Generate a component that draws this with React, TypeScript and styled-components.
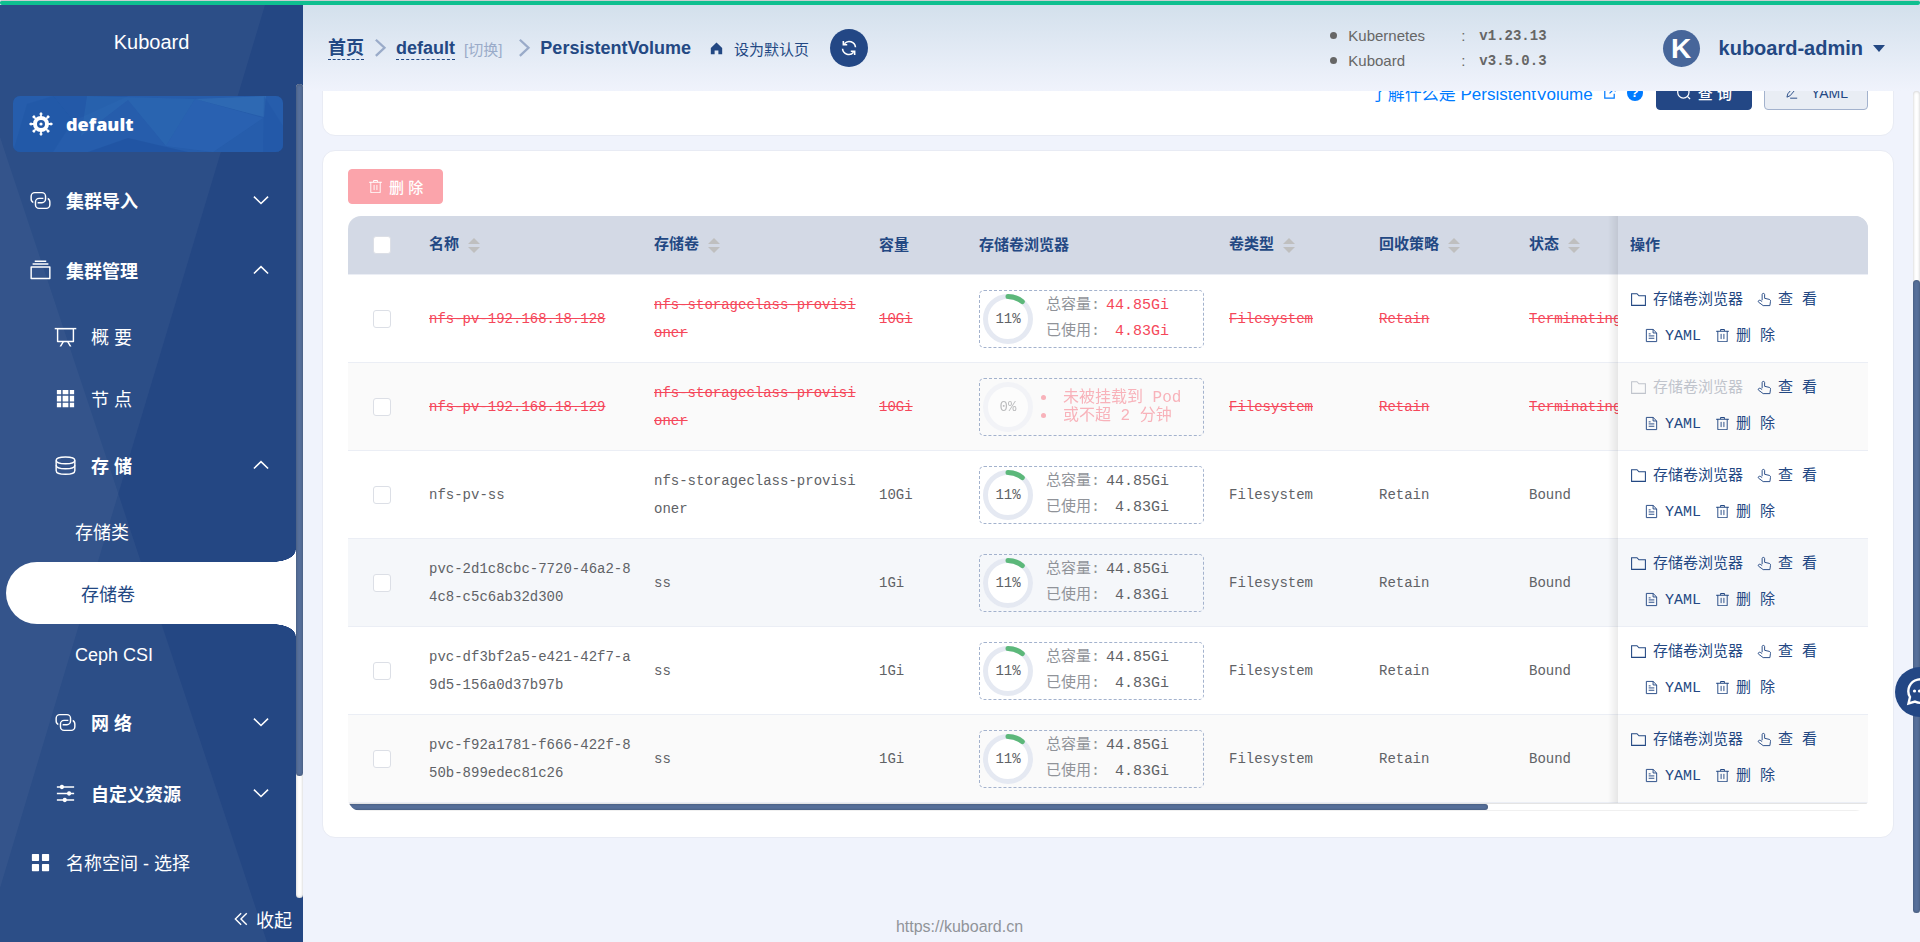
import React, { useLayoutEffect, useRef } from "react";
import styled, { createGlobalStyle, css } from "styled-components";

const SANS = '"Liberation Sans", "Noto Sans CJK SC", sans-serif';
const MONO = '"Liberation Mono", "Noto Sans CJK SC", monospace';
const NAVY = "#234883";
const THUMB = "#57709b";

const GlobalStyle = createGlobalStyle`
  *, *::before, *::after { box-sizing: border-box; }
  html, body, #root { height: 100%; }
  body { margin: 0; font-family: ${SANS}; color: #606266; background: #f0f3fc; overflow: hidden; }
  button { font: inherit; cursor: pointer; }
  a { text-decoration: none; color: inherit; }
  ul { list-style: none; margin: 0; padding: 0; }
`;

/* ---------- icons ---------- */

const Svg = styled.svg<{ $size: number }>`
  width: ${(p) => p.$size}px;
  height: ${(p) => p.$size}px;
  flex: none;
  display: block;
`;

const solid: Record<string, string[]> = {
  connection: [
    "M640 384v64H448a128 128 0 0 0-128 128v128a128 128 0 0 0 128 128h320a128 128 0 0 0 128-128V576a128 128 0 0 0-64-110.848V394.88c74.56 26.368 128 97.472 128 181.056v128a192 192 0 0 1-192 192H448a192 192 0 0 1-192-192V576a192 192 0 0 1 192-192h192z",
    "M384 640v-64h192a128 128 0 0 0 128-128V320a128 128 0 0 0-128-128H256a128 128 0 0 0-128 128v128a128 128 0 0 0 64 110.848v70.272A192.064 192.064 0 0 1 64 448V320a192 192 0 0 1 192-192h320a192 192 0 0 1 192 192v128a192 192 0 0 1-192 192H384z",
  ],
  files: [
    "M128 384v448h768V384H128zm-32-64h832a32 32 0 0 1 32 32v512a32 32 0 0 1-32 32H96a32 32 0 0 1-32-32V352a32 32 0 0 1 32-32zm64-128h704v64H160zm96-128h512v64H256z",
  ],
  board: [
    "M32 128h960v64H32z",
    "M192 192v512h640V192H192zm-64-64h768v608a32 32 0 0 1-32 32H160a32 32 0 0 1-32-32V128z",
    "M322.176 960H248.32l144.64-250.56 55.424 32L322.176 960zm453.888 0h-73.856L576 741.44l55.424-32L776.064 960z",
  ],
  grid: [
    "M640 384v256H384V384h256zm64 0h192v256H704V384zm-64 512H384V704h256v192zm64 0V704h192v192H704zm-64-768v192H384V128h256zm64 0h192v192H704V128zM320 384v256H128V384h192zm0 512H128V704h192v192zm0-768v192H128V128h192z",
  ],
  operation: [
    "M389.44 768a96.064 96.064 0 0 1 181.12 0H896v64H570.56a96.064 96.064 0 0 1-181.12 0H128v-64h261.44zm192-288a96.064 96.064 0 0 1 181.12 0H896v64H762.56a96.064 96.064 0 0 1-181.12 0H128v-64h453.44zm-320-288a96.064 96.064 0 0 1 181.12 0H896v64H442.56a96.064 96.064 0 0 1-181.12 0H128v-64h133.44z",
  ],
  menu: [
    "M160 448a32 32 0 0 1-32-32V160a32 32 0 0 1 32-32h256a32 32 0 0 1 32 32v256a32 32 0 0 1-32 32H160zm448 0a32 32 0 0 1-32-32V160a32 32 0 0 1 32-32h256a32 32 0 0 1 32 32v256a32 32 0 0 1-32 32H608zM160 896a32 32 0 0 1-32-32V608a32 32 0 0 1 32-32h256a32 32 0 0 1 32 32v256a32 32 0 0 1-32 32H160zm448 0a32 32 0 0 1-32-32V608a32 32 0 0 1 32-32h256a32 32 0 0 1 32 32v256a32 32 0 0 1-32 32H608z",
  ],
  trash: [
    "M160 256H96a32 32 0 0 1 0-64h256V95.936a32 32 0 0 1 32-32h256a32 32 0 0 1 32 32V192h256a32 32 0 1 1 0 64h-64v672a32 32 0 0 1-32 32H192a32 32 0 0 1-32-32V256zm448-64v-64H416v64h192zM224 896h576V256H224v640zm192-128a32 32 0 0 1-32-32V416a32 32 0 0 1 64 0v320a32 32 0 0 1-32 32zm192 0a32 32 0 0 1-32-32V416a32 32 0 0 1 64 0v320a32 32 0 0 1-32 32z",
  ],
  home: ["M512 110 L900 470 V900 H640 V640 H384 V900 H124 V470 Z"],
};

/* Outline icons share a 1024 unit box; each entry is one stroked path. */
const outline: Record<string, string[]> = {
  down: ["M150 340 L512 690 L874 340"],
  up: ["M150 690 L512 340 L874 690"],
  right: ["M300 90 L740 500 L300 910"],
  collapse: ["M520 180 L190 512 L520 844", "M840 180 L510 512 L840 844"],
  coin: [
    "M96 280 C96 80 928 80 928 280 C928 490 96 490 96 280 Z",
    "M96 290 V500 C96 710 928 710 928 500 V290",
    "M96 500 V730 C96 960 928 960 928 730 V500",
  ],
  folder: ["M96 160 H420 L540 290 H928 V864 H96 Z"],
  document: [
    "M160 96 H620 L864 340 V928 H160 Z",
    "M620 96 V340 H864",
    "M320 400 H450",
    "M320 540 H704",
    "M320 700 H704",
  ],
  pointer: [
    "M350 560 V170 C350 70 520 70 520 170 V430 L820 500 C900 520 930 560 920 640 L880 928 H420 C330 850 230 790 110 700 C40 630 130 530 220 570 L350 650",
  ],
  search: ["M832 470 A362 362 0 1 1 108 470 A362 362 0 1 1 832 470", "M730 730 L900 900"],
  edit: ["M200 830 L260 600 L680 110 L830 240 L420 730 Z", "M420 900 H900"],
  external: ["M460 200 H130 V890 H820 V560", "M620 130 H890 V400", "M890 130 L480 540"],
  refresh: [
    "M880 470 A360 360 0 0 0 250 270",
    "M190 110 V330 H410",
    "M144 554 A360 360 0 0 0 774 754",
    "M834 914 V694 H614",
  ],
};

type IconProps = { name: string; size: number; weight?: number };

const Icon = ({ name, size, weight = 64 }: IconProps) =>
  solid[name] ? (
    <Svg $size={size} viewBox="0 0 1024 1024" fill="currentColor" aria-hidden="true">
      {solid[name].map((d) => (
        <path key={d} d={d} />
      ))}
    </Svg>
  ) : (
    <Svg
      $size={size}
      viewBox="0 0 1024 1024"
      fill="none"
      stroke="currentColor"
      strokeWidth={weight}
      aria-hidden="true"
    >
      {outline[name].map((d) => (
        <path key={d} d={d} />
      ))}
    </Svg>
  );

const HelmIcon = () => (
  <Svg $size={24} viewBox="-12 -12 24 24" fill="none" stroke="#fff" aria-hidden="true">
    <circle r="6" strokeWidth="4" />
    <circle r="1.6" fill="#fff" stroke="none" />
    {[0, 45, 90, 135, 180, 225, 270, 315].map((a) => (
      <g key={a} transform={`rotate(${a})`}>
        <path d="M0 -7 V-11.5" strokeWidth="1.8" />
        <path d="M-1.6 -10 H1.6" strokeWidth="1.2" />
      </g>
    ))}
  </Svg>
);

/* ---------- shell ---------- */

const Shell = styled.div`
  height: 100%;
  display: flex;
  flex-direction: column;
`;

const LoadingBar = styled.div`
  flex: none;
  height: 5px;
  border-top: 1px solid #c9cdd0;
  border-radius: 2px;
  background: #0fbf90;
`;

const Body = styled.div`
  flex: 1;
  min-height: 0;
  display: flex;
`;

/* ---------- sidebar ---------- */

const Sidebar = styled.aside`
  position: relative;
  flex: none;
  width: 303px;
  display: flex;
  flex-direction: column;
  background: #244783;
  color: #fff;
  font-size: 18px;
`;

const Facets = styled.svg`
  position: absolute;
  inset: 0;
  width: 100%;
  height: 100%;
`;

const Brand = styled.div`
  position: relative;
  flex: none;
  height: 79px;
  line-height: 75px;
  text-align: center;
  font-size: 20px;
`;

const MenuScroll = styled.div`
  position: relative;
  flex: 1;
  min-height: 0;
  display: flex;
`;

const Menu = styled.nav`
  flex: 1;
  min-width: 0;
  overflow: hidden;
`;

const Track = styled.div`
  flex: none;
  width: 7px;
  background: #fff;
  border-radius: 4px;
  box-shadow: inset 0 0 3px rgba(0, 0, 0, 0.25);
`;

const Thumb = styled.div`
  height: 85%;
  border-radius: 4px;
  background: ${THUMB};
  box-shadow: inset 0 0 3px rgba(0, 0, 0, 0.3);
`;

const ClusterCard = styled.a`
  position: relative;
  display: flex;
  align-items: center;
  gap: 13px;
  height: 56px;
  margin: 12px 13px 13px;
  padding-left: 16px;
  border-radius: 7px;
  overflow: hidden;
  background: #2359a8;
  font-family: "Open Sans", ${SANS};
  font-weight: 800;

  > * { position: relative; }
  > svg:first-child { position: absolute; inset: 0; width: 100%; height: 100%; }
`;

const MenuRow = styled.a<{ $level: number; $kind: "group" | "item" }>`
  display: flex;
  align-items: center;
  gap: 14px;
  height: ${(p) => (p.$kind === "group" ? 70 : 62)}px;
  margin-top: ${(p) => (p.$kind === "group" && p.$level > 1 ? 1 : 0)}px;
  padding: 0 25px 0 ${(p) => [0, 29, 54, 75][p.$level]}px;
  font-weight: ${(p) => (p.$kind === "group" ? 700 : 400)};

  > span { flex: 1; }
`;

const NamespaceRow = styled(MenuRow)`
  height: 68px;
`;

const ActiveRow = styled(MenuRow)`
  position: relative;
  margin-left: 6px;
  border-radius: 31px 0 0 31px;
  background: #fff;
  color: ${NAVY};

  &::before, &::after {
    content: "";
    position: absolute;
    right: 0;
    width: 23px;
    height: 12px;
  }
  &::before {
    bottom: 100%;
    background: radial-gradient(ellipse 23px 12px at 0 0, transparent 97%, #fff 100%);
  }
  &::after {
    top: 100%;
    background: radial-gradient(ellipse 23px 12px at 0 100%, transparent 97%, #fff 100%);
  }
`;

const Collapse = styled.button`
  position: relative;
  flex: none;
  display: flex;
  align-items: center;
  justify-content: flex-end;
  gap: 6px;
  height: 44px;
  padding: 0 11px 2px 0;
  border: 0;
  background: none;
  color: #fff;
`;

/* ---------- header ---------- */

const Main = styled.main`
  flex: 1;
  min-width: 0;
  display: flex;
  flex-direction: column;
`;

const Header = styled.header`
  flex: none;
  height: 86px;
  display: flex;
  align-items: center;
  padding: 0 35px 0 25px;
  background: linear-gradient(#d3e0ec, #f0f3fc);
  color: ${NAVY};
`;

const Crumbs = styled.nav`
  display: flex;
  align-items: center;
  flex: 1;
  gap: 6px;
  font-size: 18px;
  font-weight: 700;
  white-space: nowrap;
`;

const Crumb = styled.a`
  line-height: 22px;
  border-bottom: 1px dashed ${NAVY};
`;

const Separator = styled.span`
  color: #9aabc9;
`;

const Switch = styled.button`
  margin: 0 6px 0 3px;
  padding: 0;
  border: 0;
  background: none;
  color: #9aabc9;
  font-size: 15px;
  font-weight: 400;
`;

const DefaultPage = styled.button`
  display: flex;
  align-items: center;
  gap: 10px;
  margin: 0 15px 0 12px;
  padding: 0;
  border: 0;
  background: none;
  color: ${NAVY};
  font-size: 15px;
  font-weight: 400;
`;

const Reload = styled.button`
  display: grid;
  place-items: center;
  width: 38px;
  height: 38px;
  padding: 0;
  border: 0;
  border-radius: 50%;
  background: #234785;
  color: #fff;
`;

const Versions = styled.ul`
  margin-right: 116px;
  font-size: 15px;
  color: #666;
`;

const Version = styled.li`
  display: grid;
  grid-template-columns: 18px 113px 18px auto;
  align-items: center;
  height: 25px;

  &::before {
    content: "";
    width: 7px;
    height: 7px;
    border-radius: 50%;
    background: #666;
  }
  b { font-family: ${MONO}; font-size: 14px; }
`;

const User = styled.button`
  display: flex;
  align-items: center;
  padding: 0;
  border: 0;
  background: none;
  color: ${NAVY};
  font-size: 20px;
  font-weight: 700;
`;

const Avatar = styled.span`
  width: 37px;
  height: 37px;
  margin-right: 19px;
  border-radius: 50%;
  background: #47669a;
  color: #fff;
  font-size: 28px;
  line-height: 37px;
`;

const Caret = styled.i`
  margin-left: 10px;
  border: 6px solid transparent;
  border-top: 7px solid ${NAVY};
  border-bottom: 0;
`;

/* ---------- content ---------- */

const Viewport = styled.div`
  flex: 1;
  min-height: 0;
  display: flex;
`;

const Scroller = styled.div`
  flex: 1;
  min-width: 0;
  overflow-y: auto;
  scrollbar-width: none;
  padding: 14px 19px 75px;
  display: flex;
  flex-direction: column;
  gap: 14px;
`;

const Card = styled.section`
  flex: none;
  padding: 18px 25px 26px;
  border: 1px solid #e8ebf4;
  border-radius: 13px;
  background: #fff;
`;

const QueryCard = styled(Card)`
  min-height: 270px;
  display: flex;
  align-items: flex-end;
  justify-content: flex-end;
  padding-bottom: 25px;
`;

const HelpLink = styled.a`
  display: flex;
  align-items: center;
  gap: 10px;
  height: 35px;
  margin-right: 13px;
  color: #007bff;
  font-size: 17px;
`;

const HelpMark = styled.span`
  width: 16px;
  height: 16px;
  border-radius: 50%;
  background: #007bff;
  color: #fff;
  font-size: 13px;
  font-weight: 700;
  line-height: 16px;
  text-align: center;
`;

const tones = {
  primary: css`background: #234785; border-color: #234785; color: #fff;`,
  plain: css`background: #e9edf4; border-color: #a3b2cd; color: ${NAVY};`,
  danger: css`background: #fba4ab; border-color: #fba4ab; color: #fff;`,
};

const Button = styled.button<{ $tone: keyof typeof tones }>`
  display: flex;
  align-items: center;
  justify-content: center;
  gap: 6px;
  height: 35px;
  padding: 0 19px;
  border: 1px solid;
  border-radius: 4px;
  font-size: 15px;
  font-weight: 500;
  ${(p) => tones[p.$tone]}

  & + & { margin-left: 12px; }
`;

const PlainButton = styled(Button)`
  gap: 12px;
  font-size: 14px;
  font-weight: 400;
`;

const TableFrame = styled.div`
  margin-top: 12px;
  border-radius: 13px;
  overflow: hidden;
`;

const Table = styled.table`
  width: 134%;
  min-width: 2030px;
  table-layout: fixed;
  border-spacing: 0;
  font-family: ${MONO};
  font-size: 14px;
  line-height: 28px;
`;

const Th = styled.th`
  height: 59px;
  padding: 4px 10px 0;
  border-bottom: 1px solid #ebeef5;
  background: #d3d9e5;
  color: ${NAVY};
  font-size: 15px;
  text-align: left;
`;

/* The pinned column casts its shadow to the left only, over the scrolled cells. */
const pinned = css`
  position: sticky;
  right: 0;
  padding-left: 12px;

  &::before {
    content: "";
    position: absolute;
    top: 0;
    bottom: -1px;
    right: 100%;
    width: 10px;
    background: linear-gradient(to left, rgba(0, 0, 0, 0.08), transparent);
  }
`;

const PinnedTh = styled(Th)`${pinned}`;

const Sortable = styled.span`
  display: inline-flex;
  align-items: center;
  gap: 9px;
  vertical-align: middle;
  padding-bottom: 2px;
`;

const SortMark = styled.span`
  display: grid;
  gap: 3px;
  margin-bottom: 2px;

  &::before, &::after { content: ""; border: 6px solid transparent; }
  &::before { border-top: 0; border-bottom-color: #bfbfbf; }
  &::after { border-bottom: 0; border-top-color: #bfbfbf; }
`;

const Td = styled.td`
  height: 88px;
  padding: 0 10px;
  border-bottom: 1px solid #ebeef5;
  background: inherit;
  word-break: break-all;
`;

const CheckTd = styled(Td)`padding: 0 0 0 25px;`;
const CheckTh = styled(Th)`padding: 0 0 0 25px;`;
const UsageTd = styled(Td)``;
const PinnedTd = styled(Td)`${pinned}`;

const Tr = styled.tr<{ $shade: string; $removing?: boolean }>`
  background: ${(p) => p.$shade};
  ${(p) =>
    p.$removing &&
    css`
      ${Td} { color: #f5475a; text-decoration: line-through; }
      ${CheckTd}, ${PinnedTd}, ${UsageTd} { text-decoration: none; }
    `}
`;

const Check = styled.input`
  appearance: none;
  display: block;
  width: 18px;
  height: 18px;
  margin: 0;
  border: 1px solid #dcdfe6;
  border-radius: 3px;
  background: #fff;
`;

const Usage = styled.div`
  display: flex;
  align-items: center;
  width: 225px;
  height: 58px;
  padding-left: 3px;
  border: 1px dashed #a3b2cd;
  border-radius: 5px;
`;

const Gauge = styled.div<{ $idle: boolean }>`
  display: grid;
  place-items: center;
  width: 50px;
  height: 50px;
  color: #606266;
  opacity: ${(p) => (p.$idle ? 0.4 : 1)};

  > * { grid-area: 1 / 1; }
`;

const Amounts = styled.dl`
  display: grid;
  grid-template-columns: auto 69px;
  margin: 0 0 0 13px;
  font-size: 15px;
  line-height: 26px;

  dt { color: #909399; }
  dd { margin: 0; text-align: right; }
`;

const Notice = styled.ul`
  margin-left: 8px;
  font-size: 16px;
  line-height: 18px;
  opacity: 0.4;

  li { display: flex; align-items: center; gap: 17px; white-space: nowrap; }
  li::before {
    content: "";
    width: 5px;
    height: 5px;
    border-radius: 50%;
    background: currentColor;
  }
`;

const Actions = styled.div`
  display: flex;
  flex-wrap: wrap;
`;

const Action = styled.button`
  display: flex;
  align-items: center;
  gap: 6px;
  height: 36px;
  padding: 0;
  border: 0;
  background: none;
  color: ${NAVY};
  font-size: 15px;

  &:disabled { color: #c0c4cc; cursor: not-allowed; }
  & + & { margin-left: 14px; }
  > svg { margin-bottom: 2px; }
`;

const TableTrack = styled.div`
  height: 8px;
  border-top: 1px solid #e4e4e4;
  border-bottom: 1px solid #f0f0f0;
  background: #fff;
`;

const TableThumb = styled.div`
  width: 75%;
  height: 6px;
  border-radius: 0 4px 4px 0;
  background: ${THUMB};
  box-shadow: inset 0 0 3px rgba(0, 0, 0, 0.3);
`;

const PageTrack = styled(Track)`
  display: flex;
  flex-direction: column;
  justify-content: flex-end;
`;

const PageThumb = styled(Thumb)`
  height: 77%;
`;

const Footer = styled.footer`
  flex: none;
  height: 29px;
  padding-right: 304px;
  text-align: center;
  color: #909399;
  font-size: 16px;
  line-height: 27px;
`;

const ChatButton = styled.button`
  position: fixed;
  right: -25px;
  bottom: 225px;
  display: grid;
  place-items: center;
  width: 50px;
  height: 50px;
  padding: 0;
  border: 0;
  border-radius: 50%;
  background: #234785;
`;

/* ---------- data ---------- */

type Volume = {
  name: string;
  storageClass: string;
  size: string;
  status: string;
  used?: number;
  shade: string;
};

const PROVISIONER = "nfs-storageclass-provisioner";

const volumes: Volume[] = [
  { name: "nfs-pv-192.168.18.128", storageClass: PROVISIONER, size: "10Gi", status: "Terminating", used: 11, shade: "#fff" },
  { name: "nfs-pv-192.168.18.129", storageClass: PROVISIONER, size: "10Gi", status: "Terminating", shade: "#fafafa" },
  { name: "nfs-pv-ss", storageClass: PROVISIONER, size: "10Gi", status: "Bound", used: 11, shade: "#fff" },
  { name: "pvc-2d1c8cbc-7720-46a2-84c8-c5c6ab32d300", storageClass: "ss", size: "1Gi", status: "Bound", used: 11, shade: "#f5f7fa" },
  { name: "pvc-df3bf2a5-e421-42f7-a9d5-156a0d37b97b", storageClass: "ss", size: "1Gi", status: "Bound", used: 11, shade: "#fff" },
  { name: "pvc-f92a1781-f666-422f-850b-899edec81c26", storageClass: "ss", size: "1Gi", status: "Bound", used: 11, shade: "#fafafa" },
];

const SortHead = ({ label }: { label: string }) => (
  <Th>
    <Sortable>
      {label}
      <SortMark />
    </Sortable>
  </Th>
);

const UsageBox = ({ used }: { used?: number }) => (
  <Usage>
    <Gauge $idle={used === undefined}>
      <Svg $size={50} viewBox="0 0 50 50" fill="none" strokeWidth="5" aria-hidden="true">
        <circle cx="25" cy="25" r="25" fill="#fff" />
        <circle cx="25" cy="25" r="22.5" stroke="#e5e9f2" />
        {used !== undefined && (
          <circle
            cx="25"
            cy="25"
            r="22.5"
            stroke="#5cb87a"
            strokeLinecap="round"
            pathLength={100}
            strokeDasharray={`${used} 100`}
            transform="rotate(-90 25 25)"
          />
        )}
      </Svg>
      <span>{used ?? 0}%</span>
    </Gauge>
    {used !== undefined ? (
      <Amounts>
        <dt>总容量:</dt>
        <dd>44.85Gi</dd>
        <dt>已使用:</dt>
        <dd>4.83Gi</dd>
      </Amounts>
    ) : (
      <Notice>
        <li>未被挂载到 Pod</li>
        <li>或不超 2 分钟</li>
      </Notice>
    )}
  </Usage>
);

const VolumeRow = ({ volume }: { volume: Volume }) => (
  <Tr $shade={volume.shade} $removing={volume.status === "Terminating"}>
    <CheckTd>
      <Check type="checkbox" aria-label={volume.name} />
    </CheckTd>
    <Td>{volume.name}</Td>
    <Td>{volume.storageClass}</Td>
    <Td>{volume.size}</Td>
    <UsageTd>
      <UsageBox used={volume.used} />
    </UsageTd>
    <Td>Filesystem</Td>
    <Td>Retain</Td>
    <Td>{volume.status}</Td>
    <PinnedTd>
      <Actions>
        <Action disabled={volume.used === undefined}>
          <Icon name="folder" size={17} /> 存储卷浏览器
        </Action>
        <Action>
          <Icon name="pointer" size={15} /> 查 看
        </Action>
        <Action>
          <Icon name="document" size={15} /> YAML
        </Action>
        <Action>
          <Icon name="trash" size={15} /> 删 除
        </Action>
      </Actions>
    </PinnedTd>
  </Tr>
);

export default function App() {
  const scroller = useRef<HTMLDivElement>(null);
  useLayoutEffect(() => {
    if (scroller.current) scroller.current.scrollTop = scroller.current.scrollHeight;
  }, []);

  return (
    <>
      <GlobalStyle />
      <Shell>
        <LoadingBar />
        <Body>
          <Sidebar>
            <Facets viewBox="0 0 303 937" preserveAspectRatio="none" fill="#fff" fillOpacity="0.04" aria-hidden="true">
              <path d="M0 0 H265 L0 883 Z" />
              <path d="M0 132 L267 937 H0 Z" />
            </Facets>
            <Brand>Kuboard</Brand>
            <MenuScroll>
              <Menu>
                <ClusterCard href="#cluster">
                  <svg viewBox="0 0 270 56" preserveAspectRatio="none" aria-hidden="true">
                    <path d="M0 0 H40 L60 25 L115 0 H270 V56 H0 Z" fill="#2a65b2" opacity=".4" />
                    <path d="M74 0 L68 40 L115 4 L153 50 L182 3 Z" fill="#3274b8" opacity=".3" />
                    <path d="M182 3 L251 21 L253 0 Z" fill="#3c7cbe" opacity=".4" />
                    <path d="M182 3 L153 50 L200 56 L250 22 Z" fill="#2f6ab8" opacity=".4" />
                    <path d="M115 42 L175 56 H75 Z" fill="#1c4c98" opacity=".4" />
                    <path d="M40 0 L60 25 L40 56 H0 L14 8 Z" fill="#1f55a2" opacity=".4" />
                    <path d="M251 0 L250 56 H270 V30 Z" fill="#2055a4" opacity=".4" />
                  </svg>
                  <HelmIcon />
                  <span>default</span>
                </ClusterCard>
                <MenuRow href="#import" $level={1} $kind="group">
                  <Icon name="connection" size={23} />
                  <span>集群导入</span>
                  <Icon name="down" size={20} weight={80} />
                </MenuRow>
                <MenuRow href="#manage" $level={1} $kind="group">
                  <Icon name="files" size={23} />
                  <span>集群管理</span>
                  <Icon name="up" size={20} weight={80} />
                </MenuRow>
                <MenuRow href="#overview" $level={2} $kind="item">
                  <Icon name="board" size={23} />
                  <span>概 要</span>
                </MenuRow>
                <MenuRow href="#nodes" $level={2} $kind="item">
                  <Icon name="grid" size={23} />
                  <span>节 点</span>
                </MenuRow>
                <MenuRow href="#storage" $level={2} $kind="group">
                  <Icon name="coin" size={23} />
                  <span>存 储</span>
                  <Icon name="up" size={20} weight={80} />
                </MenuRow>
                <MenuRow href="#storage-class" $level={3} $kind="item">
                  <span>存储类</span>
                </MenuRow>
                <ActiveRow href="#volumes" $level={3} $kind="item" aria-current="page">
                  <span>存储卷</span>
                </ActiveRow>
                <MenuRow href="#ceph" $level={3} $kind="item">
                  <span>Ceph CSI</span>
                </MenuRow>
                <MenuRow href="#network" $level={2} $kind="group">
                  <Icon name="connection" size={23} />
                  <span>网 络</span>
                  <Icon name="down" size={20} weight={80} />
                </MenuRow>
                <MenuRow href="#crd" $level={2} $kind="group">
                  <Icon name="operation" size={23} />
                  <span>自定义资源</span>
                  <Icon name="down" size={20} weight={80} />
                </MenuRow>
                <NamespaceRow href="#namespaces" $level={1} $kind="item">
                  <Icon name="menu" size={23} />
                  <span>名称空间 - 选择</span>
                </NamespaceRow>
              </Menu>
              <Track>
                <Thumb />
              </Track>
            </MenuScroll>
            <Collapse>
              <Icon name="collapse" size={18} weight={80} />
              收起
            </Collapse>
          </Sidebar>

          <Main>
            <Header>
              <Crumbs>
                <Crumb href="#home">首页</Crumb>
                <Separator>
                  <Icon name="right" size={20} weight={120} />
                </Separator>
                <Crumb href="#default">default</Crumb>
                <Switch>[切换]</Switch>
                <Separator>
                  <Icon name="right" size={20} weight={120} />
                </Separator>
                <span>PersistentVolume</span>
                <DefaultPage>
                  <Icon name="home" size={15} />
                  设为默认页
                </DefaultPage>
                <Reload aria-label="刷新">
                  <Icon name="refresh" size={18} weight={90} />
                </Reload>
              </Crumbs>
              <Versions>
                <Version>
                  <span>Kubernetes</span>
                  <span>:</span>
                  <b>v1.23.13</b>
                </Version>
                <Version>
                  <span>Kuboard</span>
                  <span>:</span>
                  <b>v3.5.0.3</b>
                </Version>
              </Versions>
              <User>
                <Avatar>K</Avatar>
                kuboard-admin
                <Caret />
              </User>
            </Header>

            <Viewport>
              <Scroller ref={scroller}>
                <QueryCard>
                  <HelpLink href="#help">
                    了解什么是 PersistentVolume
                    <Icon name="external" size={14} weight={90} />
                    <HelpMark>?</HelpMark>
                  </HelpLink>
                  <Button $tone="primary">
                    <Icon name="search" size={16} weight={80} />查 询
                  </Button>
                  <PlainButton $tone="plain">
                    <Icon name="edit" size={15} />
                    YAML
                  </PlainButton>
                </QueryCard>
                <Card>
                  <Button $tone="danger">
                    <Icon name="trash" size={15} />删 除
                  </Button>
                  <TableFrame>
                    <Table>
                      <colgroup>
                        <col width="71" />
                        <col width="225" />
                        <col width="225" />
                        <col width="100" />
                        <col width="250" />
                        <col width="150" />
                        <col width="150" />
                        <col />
                        <col width="250" />
                      </colgroup>
                      <thead>
                        <tr>
                          <CheckTh>
                            <Check type="checkbox" aria-label="全选" />
                          </CheckTh>
                          <SortHead label="名称" />
                          <SortHead label="存储卷" />
                          <Th>容量</Th>
                          <Th>存储卷浏览器</Th>
                          <SortHead label="卷类型" />
                          <SortHead label="回收策略" />
                          <SortHead label="状态" />
                          <PinnedTh>操作</PinnedTh>
                        </tr>
                      </thead>
                      <tbody>
                        {volumes.map((v) => (
                          <VolumeRow key={v.name} volume={v} />
                        ))}
                      </tbody>
                    </Table>
                    <TableTrack>
                      <TableThumb />
                    </TableTrack>
                  </TableFrame>
                </Card>
              </Scroller>
              <PageTrack>
                <PageThumb />
              </PageTrack>
            </Viewport>
            <Footer>
              <a href="#kuboard">https://kuboard.cn</a>
            </Footer>
          </Main>
        </Body>
        <ChatButton aria-label="客服">
          <Svg $size={28} viewBox="0 0 28 28" fill="none" stroke="#fff" strokeWidth="2.4" aria-hidden="true">
            <path d="M2.5 25.5 L4 19 A11.7 11.7 0 1 1 9 23.6 Z" />
            <g fill="#fff" stroke="none">
              <circle cx="8.5" cy="13" r="1.6" />
              <circle cx="13.5" cy="13" r="1.6" />
              <circle cx="18.5" cy="13" r="1.6" />
            </g>
          </Svg>
        </ChatButton>
      </Shell>
    </>
  );
}
